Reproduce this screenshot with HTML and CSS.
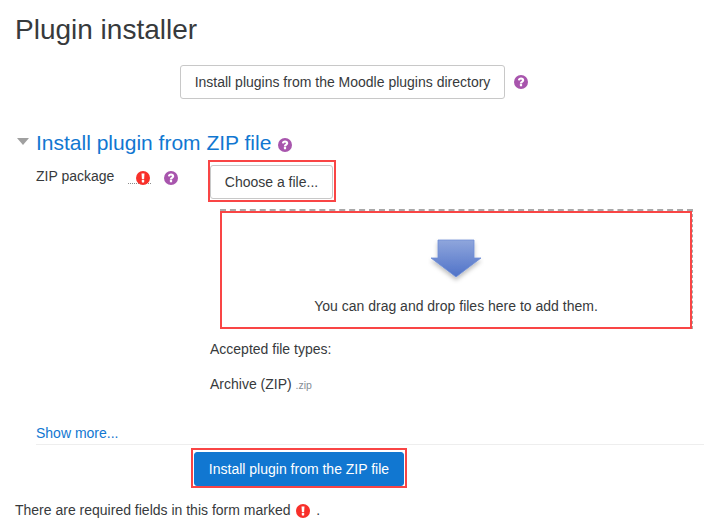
FILE: index.html
```html
<!DOCTYPE html>
<html lang="en">
<head>
<meta charset="utf-8">
<title>Plugin installer</title>
<link rel="stylesheet" href="styles.css">
</head>
<body>
<svg class="defs" width="0" height="0" aria-hidden="true">
  <defs>
    <symbol id="q" viewBox="0 0 14 14">
      <circle cx="7" cy="7" r="7" fill="#a855ad"/>
      <path d="M3.900 5.300C4 3.600 5.400 2.600 7.100 2.600c1.800 0 3.100 1.100 3.100 2.600 0 1.100-.7 1.700-1.400 2.200-.5.3-.7.6-.7 1.100H5.900c0-1.100.4-1.700 1.100-2.200.5-.3.9-.6.9-1.100 0-.5-.4-.8-.9-.8-.6 0-1 .4-1.100 1z" fill="#fff"/>
      <rect x="5.900" y="9.100" width="2.200" height="2.100" rx=".3" fill="#fff"/>
    </symbol>
    <symbol id="req" viewBox="0 0 14 14">
      <circle cx="7" cy="7" r="7" fill="#f8302a"/>
      <path d="M5.500 2.400h3l-.4 5.900H5.900z" fill="#fff"/>
      <rect x="5.800" y="9.100" width="2.400" height="2.400" rx=".4" fill="#fff"/>
    </symbol>
    <linearGradient id="arrowfill" x1="0" y1="0" x2="0" y2="1">
      <stop offset="0" stop-color="#8fa6dc"/>
      <stop offset="1" stop-color="#4f72c8"/>
    </linearGradient>
    <filter id="arrowshadow" x="-20%" y="-20%" width="140%" height="150%">
      <feDropShadow dx="0" dy="3" stdDeviation="2" flood-color="#000" flood-opacity=".25"/>
    </filter>
  </defs>
</svg>

<main class="page">
  <h1 class="title">Plugin installer</h1>

  <div class="directory">
    <button class="btn btn-directory" type="button">Install plugins from the Moodle plugins directory</button>
    <svg class="icon"><use href="#q"/></svg>
  </div>

  <section class="fieldset">
    <h2 class="legend">
      <span class="caret"></span>
      <a class="legend-link" href="#">Install plugin from ZIP file</a>
      <svg class="icon legend-icon"><use href="#q"/></svg>
    </h2>

    <div class="row">
      <div class="label-col">
        <span class="label">ZIP package</span>
        <span class="dots"><svg class="icon"><use href="#req"/></svg></span>
        <svg class="icon help"><use href="#q"/></svg>
      </div>
      <div class="field-col">
        <div class="hl hl-choose"><button class="btn btn-choose" type="button">Choose a file...</button></div>
        <div class="dropzone">
          <div class="hl hl-drop">
            <svg class="arrow" width="56" height="48" viewBox="0 0 56 48">
              <path d="M10 4h36v18h7L28 41 3 22h7z" fill="url(#arrowfill)" stroke="#6f8ed6" stroke-width=".8" filter="url(#arrowshadow)"/>
            </svg>
            <p class="drop-text">You can drag and drop files here to add them.</p>
          </div>
        </div>
        <p class="types-title">Accepted file types:</p>
        <p class="types-item">Archive (ZIP) <small class="ext">.zip</small></p>
      </div>
    </div>

    <a class="more" href="#">Show more...</a>
  </section>

  <div class="actions">
    <div class="hl hl-submit"><button class="btn btn-primary" type="button">Install plugin from the ZIP file</button></div>
  </div>

  <p class="required">There are required fields in this form marked <svg class="icon inline-icon"><use href="#req"/></svg> .</p>
</main>
</body>
</html>
```

FILE: styles.css
```css
* { box-sizing: border-box; }
html, body { margin: 0; padding: 0; background: #fff; }
body {
  font-family: "Liberation Sans", Arial, sans-serif;
  font-size: 14px;
  line-height: 21px;
  color: #373a3c;
  width: 712px;
  height: 524px;
  overflow: hidden;
}
.defs { position: absolute; }
.page { padding: 0 8px 0 15px; }
.title {
  margin: 0;
  padding-top: 13px;
  font-size: 28px;
  line-height: 33px;
  font-weight: 400;
  color: #373a3c;
}
.icon { width: 14px; height: 14px; display: inline-block; flex: none; }

.btn {
  font: inherit;
  color: #373a3c;
  background: #fff;
  border: 1px solid #c8c8c8;
  border-radius: 3px;
  padding: 0;
  height: 34px;
  white-space: nowrap;
}
.btn-directory { width: 325px; }
.directory {
  display: flex;
  align-items: center;
  gap: 9px;
  margin-top: 19px;
  padding-left: 165px;
}
.fieldset { margin-top: 28px; }
.legend {
  display: flex;
  align-items: center;
  margin: 0 0 1px;
  height: 30px;
  font-size: 21px;
  font-weight: 400;
}
.caret {
  width: 0;
  height: 0;
  margin: 1px 7px 2px 2px;
  border-left: 6.500px solid transparent;
  border-right: 6.500px solid transparent;
  border-top: 7px solid #a0a0a0;
}
.legend-link { color: #1177d1; text-decoration: none; }
.legend-icon { margin: 5px 0 0 7px; }

.row { display: flex; padding-left: 21px; }
.label-col {
  width: 172px;
  flex: none;
  display: flex;
  align-items: flex-start;
  padding-top: 8px;
}
.label { width: 92px; flex: none; }
.dots {
  display: flex;
  justify-content: flex-end;
  width: 23px;
  height: 18px;
  padding-top: 5px;
  flex: none;
  border-bottom: 1px dotted #8a8a8a;
}
.dots .icon { margin-right: 1px; }
.help { margin: 5px 0 0 13px; }
.field-col { flex: 1; min-width: 0; }
.hl { border: 2px solid #f94545; }
.hl-choose { width: 128px; height: 42px; margin-top: 2px; padding: 3px 1px 0 0; }
.btn-choose { display: block; width: 123px; }
.dropzone {
  margin: 7px 0 0 12px;
  border-top: 2px dashed #a8a8a8;
  border-right: 1px dashed #a8a8a8;
  width: 473px;
}
.hl-drop { height: 118px; text-align: center; }
.arrow { display: block; margin: 23px auto 0; }
.drop-text { margin: 12px 0 0; }
.types-title { margin: 10px 0 0 2px; }
.types-item { margin: 14px 0 0 2px; }
.ext { font-size: 10.500px; color: #868e96; }
.more {
  display: block;
  margin: 27px 0 0 21px;
  color: #1177d1;
  text-decoration: none;
  border-bottom: 1px solid #eeeeee;
}
.actions { padding-left: 176px; margin-top: 3px; }
.hl-submit { width: 216px; height: 40px; padding: 2px 1px 0 1px; }
.btn-primary {
  display: block;
  width: 210px;
  color: #fff;
  background: #1177d1;
  border-color: #1177d1;
}
.required { margin: 12px 0 0; }
.inline-icon { vertical-align: -3px; margin: 0 2px 0 2px; }
```
